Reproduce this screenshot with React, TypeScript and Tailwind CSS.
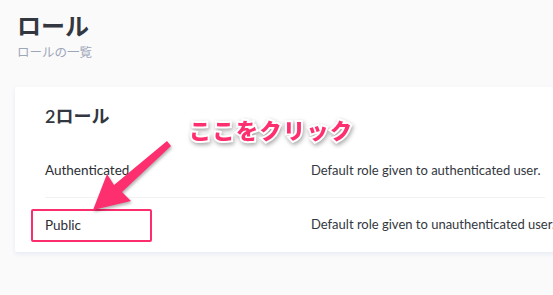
import React from "react";

const roles = [
  { name: "Authenticated", description: "Default role given to authenticated user." },
  { name: "Public", description: "Default role given to unauthenticated user." },
];

export default function App() {
  return (
    <div className="relative w-[553px] h-[295px] overflow-hidden bg-[#fafafb] font-['Lato','Noto_Sans_CJK_JP',sans-serif]">
      <div className="flex flex-col pt-[10px] pl-[15px]">
        {/* page header */}
        <div className="pl-[2px]">
          <h1 className="text-[24px] leading-[30px] font-bold text-[#333740] font-['Noto_Sans_CJK_JP',sans-serif]">
            ロール
          </h1>
          <p className="mt-[4px] text-[12.5px] leading-[16px] text-[#9ea7b8] font-['Noto_Sans_CJK_JP',sans-serif]">
            ロールの一覧
          </p>
        </div>

        {/* roles card */}
        <div className="mt-[27px] w-[560px] h-[165px] bg-white rounded-[2px] shadow-[0_2px_4px_rgba(227,233,243,0.9)] px-[30px]">
          <div className="h-[57px] pt-[17px]">
            <h2 className="text-[18px] leading-[24px] font-semibold text-[#333740]">2ロール</h2>
          </div>
          {roles.map((r, i) => (
            <div key={r.name}
                 className={`flex items-center h-[54px] ${i === 0 ? "border-b border-[#f1f1f2]" : ""}`}>
              <span className="w-[266px] shrink-0 text-[13.5px] font-normal text-[#2b2e35] font-['Lato',sans-serif]">
                {r.name}
              </span>
              <span className="text-[13px] text-[#333740] font-['Lato',sans-serif] whitespace-nowrap">
                {r.description}
              </span>
            </div>
          ))}
        </div>
      </div>

      {/* annotation: highlight box */}
      <div className="absolute left-[31px] top-[209px] w-[121px] h-[33px] border-2 border-[#fb2d6d] rounded-[2px]" />

      {/* annotation: arrow */}
      <svg className="absolute left-0 top-0 drop-shadow-[1px_2px_1.5px_rgba(0,0,0,0.3)]" width="553" height="295" viewBox="0 0 553 295">
        <polygon
          points="93,210 131,201 122,192 171,146 167,141 114,185 107,174"
          fill="#fd2f6f"
        />
      </svg>

      {/* annotation: label */}
      <div className="absolute left-[189px] top-[113px] text-[22px] leading-[32px] font-black tracking-[1.5px] text-[#fd2f6f] font-['Noto_Sans_CJK_JP',sans-serif] [-webkit-text-stroke:4px_white] [paint-order:stroke_fill] drop-shadow-[1px_2px_2px_rgba(0,0,0,0.35)]">
        ここをクリック
      </div>
    </div>
  );
}
